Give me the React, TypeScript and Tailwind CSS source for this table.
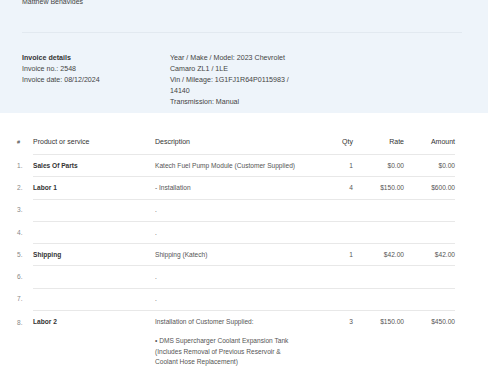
import React from "react";

const rows = [
  { n: "1.", p: "Sales Of Parts", d: "Katech Fuel Pump Module (Customer Supplied)", q: "1", r: "$0.00", a: "$0.00" },
  { n: "2.", p: "Labor 1", d: "- Installation", q: "4", r: "$150.00", a: "$600.00" },
  { n: "3.", p: "", d: ".", q: "", r: "", a: "" },
  { n: "4.", p: "", d: ".", q: "", r: "", a: "" },
  { n: "5.", p: "Shipping", d: "Shipping (Katech)", q: "1", r: "$42.00", a: "$42.00" },
  { n: "6.", p: "", d: ".", q: "", r: "", a: "" },
  { n: "7.", p: "", d: ".", q: "", r: "", a: "" },
];

export default function App() {
  return (
    <div className="w-[488px] h-[366px] overflow-hidden bg-white text-[#333] antialiased" style={{ fontFamily: '"Liberation Sans", Arial, sans-serif' }}>
      <div className="bg-[#eef4fa] h-[117px] px-[22px] -mt-[4px] pt-[0.5px]">
        <div className="text-[7px] leading-[9px] text-[#444]">Matthew Benavides</div>
        <div className="h-px bg-[#e2e9f0] mt-[26px] mr-[4px]"></div>
        <div className="flex mt-[20px]">
          <div className="w-[148px] text-[7.1px] leading-[11px] text-[#444]">
            <div className="font-bold text-[#333]">Invoice details</div>
            <div>Invoice no.: 2548</div>
            <div>Invoice date: 08/12/2024</div>
          </div>
          <div className="w-[134px] text-[7.1px] leading-[11px] text-[#444]">
            <div>Year / Make / Model: 2023 Chevrolet</div>
            <div>Camaro ZL1 / 1LE</div>
            <div>Vin / Mileage: 1G1FJ1R64P0115983 /</div>
            <div>14140</div>
            <div>Transmission: Manual</div>
          </div>
        </div>
      </div>
      <div className="pl-[17px] pr-[33px] pt-[17px] text-[6.6px]">
        <div className="flex items-center h-[24px] text-[7px] text-[#333]">
          <div className="w-[16px] text-[5.5px]">#</div>
          <div className="w-[122px]">Product or service</div>
          <div className="flex-1">Description</div>
          <div className="w-[30px] text-right">Qty</div>
          <div className="w-[51px] text-right">Rate</div>
          <div className="w-[51px] text-right">Amount</div>
        </div>
        {rows.map((r) => (
          <div key={r.n} className="flex h-[22.3px]">
            <div className="w-[16px] border-t border-transparent flex items-center text-[#888]">{r.n}</div>
            <div className="flex-1 flex border-t border-[#e8e8e8] items-center">
              <div className="w-[122px] font-bold text-[#333]">{r.p}</div>
              <div className="flex-1 text-[#555]">{r.d}</div>
              <div className="w-[30px] text-right text-[#555]">{r.q}</div>
              <div className="w-[51px] text-right text-[#555]">{r.r}</div>
              <div className="w-[51px] text-right text-[#555]">{r.a}</div>
            </div>
          </div>
        ))}
        <div className="flex">
          <div className="w-[16px] pt-[7px] border-t border-transparent text-[#888] leading-[10.5px]">8.</div>
          <div className="flex-1 border-t border-[#e8e8e8] pt-[6px] leading-[10.5px]">
            <div className="flex">
              <div className="w-[122px] font-bold text-[#333]">Labor 2</div>
              <div className="flex-1 text-[#555]">
                <div>Installation of Customer Supplied:</div>
                <div className="h-[8.5px]"></div>
                <div>• DMS Supercharger Coolant Expansion Tank</div>
                <div>(Includes Removal of Previous Reservoir &amp;</div>
                <div>Coolant Hose Replacement)</div>
              </div>
              <div className="w-[30px] text-right text-[#555]">3</div>
              <div className="w-[51px] text-right text-[#555]">$150.00</div>
              <div className="w-[51px] text-right text-[#555]">$450.00</div>
            </div>
          </div>
        </div>
      </div>
    </div>
  );
}
